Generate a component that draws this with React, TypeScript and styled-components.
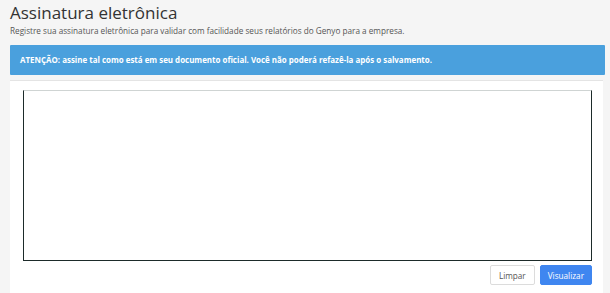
import React from "react";
import styled, { createGlobalStyle } from "styled-components";

const Global = createGlobalStyle`
  html, body { margin: 0; padding: 0; background: #f5f5f5; }
  body { font-family: "Open Sans", "Noto Sans", sans-serif; color: #333; }
`;

const Page = styled.div`
  padding: 3px 5px 0 10px;
  height: 293px;
  box-sizing: border-box;
  overflow: hidden;
  display: flex;
  flex-direction: column;
`;

const Title = styled.h1`
  margin: 0;
  font-size: 17px;
  font-weight: 400;
  line-height: 20px;
  color: #333;
`;

const Subtitle = styled.p`
  margin: 2px 0 0;
  font-size: 8.2px;
  line-height: 12px;
  color: #555;
`;

const Alert = styled.div`
  margin-top: 8px;
  background: #4aa0dd;
  color: #fff;
  font-weight: 700;
  font-size: 7.95px;
  line-height: 12px;
  padding: 9px 10px 9px;
  border-radius: 1px;
`;

const Panel = styled.div`
  margin-top: 5px;
  margin-right: 2px;
  flex: 1;
  background: #fff;
  border-top: 1px solid #e4e4e4;
  padding: 9px 11px 0 13px;
  display: flex;
  flex-direction: column;
`;

const Canvas = styled.div`
  height: 169px;
  border: 1px solid #1d2b2a;
  border-top-color: #cfd4d3;
  background: #fff;
`;

const Actions = styled.div`
  display: flex;
  justify-content: flex-end;
  gap: 5px;
  margin-top: 4px;
`;

const Button = styled.button<{ $primary?: boolean }>`
  font-family: "Open Sans", "Noto Sans", sans-serif;
  font-size: 8.2px;
  height: 20px;
  padding: 0 ${(p) => (p.$primary ? "7px" : "8px")};
  border-radius: 2px;
  border: 1px solid ${(p) => (p.$primary ? "#3f86f0" : "#dcdcdc")};
  background: ${(p) => (p.$primary ? "#3f86f0" : "#fff")};
  color: ${(p) => (p.$primary ? "#fff" : "#555")};
  cursor: pointer;
`;

export default function App() {
  return (
    <>
      <Global />
      <Page>
        <Title>Assinatura eletrônica</Title>
        <Subtitle>
          Registre sua assinatura eletrônica para validar com facilidade seus relatórios do Genyo para a empresa.
        </Subtitle>
        <Alert>
          ATENÇÃO: assine tal como está em seu documento oficial. Você não poderá refazê-la após o salvamento.
        </Alert>
        <Panel>
          <Canvas />
          <Actions>
            <Button>Limpar</Button>
            <Button $primary>Visualizar</Button>
          </Actions>
        </Panel>
      </Page>
    </>
  );
}
